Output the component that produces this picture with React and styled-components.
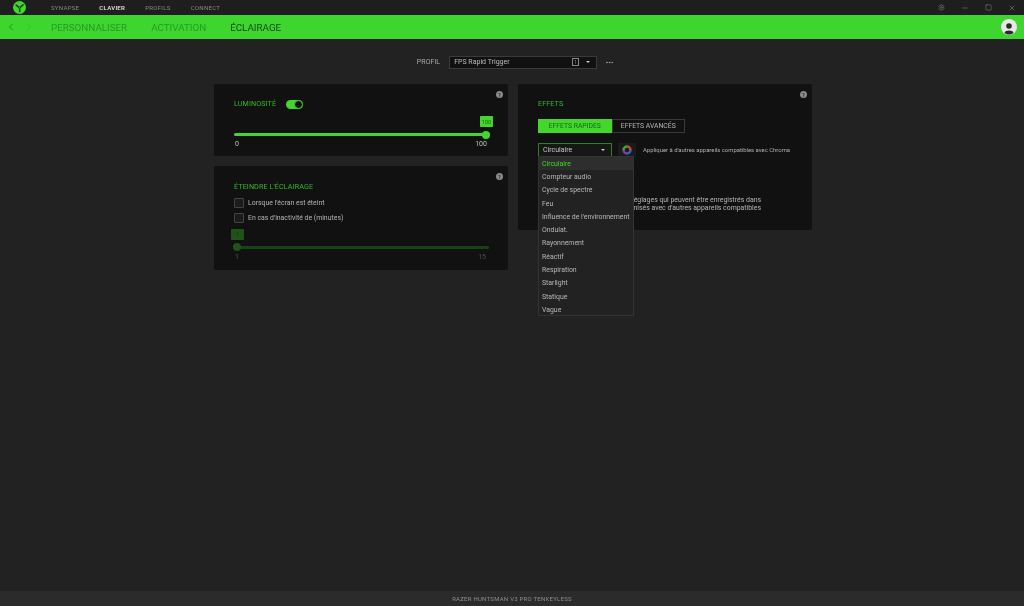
import React from 'react';
import styled, { createGlobalStyle } from 'styled-components';
import { ChevronLeft, ChevronRight, Minus, Square, X, Settings, MoreHorizontal } from 'lucide-react';

const Global = createGlobalStyle`
  html, body { margin: 0; padding: 0; height: 100%; background: #222; }
  body { font-family: Roboto, "Liberation Sans", sans-serif; overflow: hidden; }
  * { box-sizing: border-box; }
`;
const Page = styled.div`
  width: 1024px; height: 606px; display: flex; flex-direction: column; background: #222; color: #bbb;
  filter: blur(.3px);
`;
const TitleBar = styled.div`
  height: 15px; background: #1e1e1e; display: flex; align-items: center; padding-left: 13px; flex: none;
`;
const Logo = styled.svg`width: 13px; height: 13px; margin-right: 25px; flex: none;`;
const TopTabs = styled.nav`display: flex; gap: 20px; flex: 1; font-size: 6.1px; letter-spacing: .25px;`;
const TopTab = styled.span`
  color: ${p => (p.$active ? '#e8e8e8' : '#858585')};
  font-weight: ${p => (p.$active ? 500 : 400)};
`;
const WinControls = styled.div`display: flex; align-items: center; color: #777;`;
const WinButton = styled.span`
  width: 23.5px; display: flex; justify-content: center; align-items: center;
`;
const GreenBar = styled.div`
  height: 24px; background: #3fd52f; display: flex; align-items: center; flex: none; padding: 0 7px 0 5px;
`;
const Arrows = styled.div`display: flex; gap: 6px; width: 46px; align-items: center;`;
const SubTabs = styled.nav`display: flex; gap: 24px; flex: 1; font-size: 9.8px;`;
const SubTab = styled.span`color: ${p => (p.$active ? '#14481a' : '#259a29')};`;
const Avatar = styled.svg`width: 16px; height: 16px;`;
const Main = styled.main`flex: 1; display: flex; flex-direction: column; align-items: center; min-height: 0;`;
const ProfileRow = styled.div`
  display: flex; align-items: center; height: 45px; padding-top: 1px; margin-left: 7px; font-size: 7px; color: #aaa;
`;
const ProfileLabel = styled.span`margin-right: 9px; letter-spacing: .05px;`;
const ProfileSelect = styled.div`
  width: 148px; height: 13px; background: #111; border: 1px solid #3a3a3a; display: flex; align-items: center;
  padding: 0 6px 0 4px; color: #bcbcbc; margin-right: 8px;
`;
const ProfileName = styled.span`flex: 1;`;
const SlotBadge = styled.span`
  width: 7px; height: 8px; border: .5px solid #888; font-size: 5px; line-height: 1; color: #888; display: flex; align-items: center; justify-content: center; margin-right: 7px;
`;
const Caret = styled.span`
  width: 0; height: 0; border-left: 2.5px solid transparent; border-right: 2.5px solid transparent; border-top: 2.5px solid #ccc;
`;
const Grid = styled.div`
  display: grid; grid-template-columns: 294px 294px; gap: 10px; margin-left: 2px; align-items: start;
`;
const Column = styled.div`display: flex; flex-direction: column; gap: 10px;`;
const Card = styled.section`
  position: relative; background: #111; border-radius: 2px; height: ${p => p.$h}px; padding: ${p => p.$pad};
`;
const Help = styled.span`
  position: absolute; top: 7px; right: 5px; width: 7px; height: 7px; border-radius: 50%; background: #8b8b8b;
  color: #222; font-size: 5px; font-weight: 700; display: flex; align-items: center; justify-content: center;
`;
const CardTitle = styled.h2`
  margin: 0; font-weight: 400; font-size: 7.2px; color: #36b82b; line-height: 10px; letter-spacing: .1px;
`;
const TitleRow = styled.div`display: flex; align-items: center; gap: 10px;`;
const Toggle = styled.span`
  position: relative; width: 17px; height: 9px; border-radius: 5px; background: #44d62c;
`;
const ToggleKnob = styled.span`
  position: absolute; right: 0; top: 0; width: 9px; height: 9px; border-radius: 50%; background: #111; border: 1.5px solid #44d62c;
`;
const SliderWrap = styled.div`margin-top: ${p => p.$mt}px; position: relative; opacity: ${p => p.$dim ? .33 : 1};`;
const Track = styled.div`
  height: 3px; border-radius: 2px; background: ${p => (p.$dim ? '#29a822' : '#44d62c')};
`;
const Thumb = styled.span`
  position: absolute; top: -2.5px; width: 8px; height: 8px; border-radius: 50%; background: #44d62c;
  ${p => (p.$left ? 'left: -1px;' : 'right: 0;')}
`;
const ValueTip = styled.span`
  position: absolute; top: -17px; ${p => (p.$left ? 'left: -3px;' : 'right: -3px;')} width: 13px; height: 11px; background: #44d62c; border-radius: 1px;
  color: #126b12; font-size: 5.5px; display: flex; align-items: center; justify-content: center;
`;
const Scale = styled.div`
  display: flex; justify-content: space-between; font-size: 7px; margin-top: 4px; color: #c0c0c0; padding: 0 3px 0 1px; line-height: 9px;
`;
const CheckRow = styled.label`
  display: flex; align-items: center; gap: 4px; font-size: 6.9px; color: #b5b5b5; height: 10px; margin-top: ${p => p.$mt}px;
`;
const Box = styled.span`width: 10px; height: 10px; border: 1px solid #444; background: #1b1b1b; border-radius: 1px;`;
const Segments = styled.div`display: flex; margin-top: 10px; width: 147px; height: 13.5px; font-size: 6.8px;`;
const Segment = styled.div`
  flex: 1; display: flex; align-items: center; justify-content: center;
  background: ${p => (p.$on ? '#44d62c' : '#111')}; color: ${p => (p.$on ? '#126b12' : '#b5b5b5')};
  border: 1px solid ${p => (p.$on ? '#44d62c' : '#3a3a3a')};
`;
const EffectRow = styled.div`display: flex; align-items: center; margin-top: 10px; height: 14px; position: relative;`;
const EffectSelect = styled.div`
  flex: none; width: 74px; height: 14px; border: 1px solid #2d7f28; background: #171717; display: flex; align-items: center; justify-content: space-between;
  padding: 0 6px 0 4px; font-size: 7px; color: #c4c4c4; margin-right: 6px;
`;
const ChromaTile = styled.span`
  flex: none; width: 18px; height: 14px; background: #1b1b1b; display: flex; align-items: center; justify-content: center; margin-right: 7px;
`;
const ApplyText = styled.span`font-size: 5.9px; color: #b0b0b0; white-space: nowrap;`;
const Menu = styled.ul`
  position: absolute; left: 0; top: 13.5px; width: 96px; height: 160px; margin: 0; padding: 0; list-style: none;
  background: #222; border: 1px solid #333; z-index: 2;
`;
const MenuItem = styled.li`
  height: 13.3px; padding-left: 3px; display: flex; align-items: center; font-size: 6.9px; white-space: nowrap;
  color: ${p => (p.$on ? '#44d62c' : '#b8b8b8')}; background: ${p => (p.$on ? '#2e2e2e' : 'transparent')};
`;
const Description = styled.p`
  margin: 39px 0 0; width: 223px; text-align: right; font-size: 6.9px; line-height: 8.5px; color: #b5b5b5; white-space: nowrap;
`;
const Footer = styled.footer`
  height: 15px; background: #2b2b2b; flex: none; display: flex; align-items: center; justify-content: center;
  font-size: 6px; color: #8d8d8d; letter-spacing: .25px;
`;

const effects = ['Circulaire','Compteur audio','Cycle de spectre','Feu',"Influence de l'environnement",'Ondulat.','Rayonnement','Réactif','Respiration','Starlight','Statique','Vague'];

export default function App() {
  return (
    <Page>
      <Global />
      <TitleBar>
        <Logo viewBox="0 0 24 24">
          <circle cx="12" cy="12" r="12" fill="#44d62c" />
          <path d="M12 12.5 L6 7.5 M12 12.5 L18.5 7 M12 12.5 L12.5 19.5" stroke="#15401a" strokeWidth="3" strokeLinecap="round" fill="none" />
          <circle cx="12" cy="12.5" r="1" fill="#44d62c" />
        </Logo>
        <TopTabs>
          <TopTab>SYNAPSE</TopTab>
          <TopTab $active>CLAVIER</TopTab>
          <TopTab>PROFILS</TopTab>
          <TopTab>CONNECT</TopTab>
        </TopTabs>
        <WinControls>
          <WinButton><Settings size={7} /></WinButton>
          <WinButton><Minus size={8} /></WinButton>
          <WinButton><Square size={7} /></WinButton>
          <WinButton><X size={8} /></WinButton>
        </WinControls>
      </TitleBar>
      <GreenBar>
        <Arrows>
          <ChevronLeft size={12} strokeWidth={1.5} color="#1f7a2a" />
          <ChevronRight size={12} strokeWidth={1.5} color="#36b82b" />
        </Arrows>
        <SubTabs>
          <SubTab>PERSONNALISER</SubTab>
          <SubTab>ACTIVATION</SubTab>
          <SubTab $active>ÉCLAIRAGE</SubTab>
        </SubTabs>
        <Avatar viewBox="0 0 16 16">
          <circle cx="8" cy="8" r="8" fill="#e8e8e8" />
          <circle cx="8" cy="7" r="2.8" fill="#2a2a2a" />
          <path d="M3.5 14 C4 10.8 12 10.8 12.5 14 A8 8 0 0 1 3.5 14 Z" fill="#2a2a2a" />
        </Avatar>
      </GreenBar>
      <Main>
        <ProfileRow>
          <ProfileLabel>PROFIL</ProfileLabel>
          <ProfileSelect>
            <ProfileName>FPS Rapid Trigger</ProfileName>
            <SlotBadge>1</SlotBadge>
            <Caret />
          </ProfileSelect>
          <MoreHorizontal size={9} color="#aaa" />
        </ProfileRow>
        <Grid>
          <Column>
            <Card $h={72} $pad="15px 18px 0 20px">
              <Help>?</Help>
              <TitleRow>
                <CardTitle>LUMINOSITÉ</CardTitle>
                <Toggle><ToggleKnob /></Toggle>
              </TitleRow>
              <SliderWrap $mt={24}>
                <ValueTip>100</ValueTip>
                <Track />
                <Thumb />
              </SliderWrap>
              <Scale><span>0</span><span>100</span></Scale>
            </Card>
            <Card $h={104} $pad="16px 19px 0 20px">
              <Help>?</Help>
              <CardTitle>ÉTEINDRE L'ÉCLAIRAGE</CardTitle>
              <CheckRow $mt={6}><Box />Lorsque l'écran est éteint</CheckRow>
              <CheckRow $mt={4.5}><Box />En cas d'inactivité de (minutes)</CheckRow>
              <SliderWrap $mt={23} $dim>
                <ValueTip $left>1</ValueTip>
                <Track $dim />
                <Thumb $left />
                <Scale><span>1</span><span>15</span></Scale>
              </SliderWrap>
            </Card>
          </Column>
          <Card $h={146} $pad="15px 20px 0">
            <Help>?</Help>
            <CardTitle>EFFETS</CardTitle>
            <Segments>
              <Segment $on>EFFETS RAPIDES</Segment>
              <Segment>EFFETS AVANCÉS</Segment>
            </Segments>
            <EffectRow>
              <EffectSelect>Circulaire<Caret /></EffectSelect>
              <ChromaTile>
                <svg width="10" height="10" viewBox="0 0 20 20" fill="none" strokeWidth="5">
                  <path d="M10 3 A7 7 0 0 1 17 10" stroke="#c9483a" />
                  <path d="M17 10 A7 7 0 0 1 10 17" stroke="#3b5fc0" />
                  <path d="M10 17 A7 7 0 0 1 3 10" stroke="#7a3fb4" />
                  <path d="M3 10 A7 7 0 0 1 10 3" stroke="#3fa82c" />
                </svg>
              </ChromaTile>
              <ApplyText>Appliquer à d'autres appareils compatibles avec Chroma</ApplyText>
              <Menu>
                {effects.map((e, i) => <MenuItem key={e} $on={i === 0}>{e}</MenuItem>)}
              </Menu>
            </EffectRow>
            <Description>
              églages qui peuvent être enregistrés dans<br />
              nisés avec d'autres appareils compatibles
            </Description>
          </Card>
        </Grid>
      </Main>
      <Footer>RAZER HUNTSMAN V3 PRO TENKEYLESS</Footer>
    </Page>
  );
}
